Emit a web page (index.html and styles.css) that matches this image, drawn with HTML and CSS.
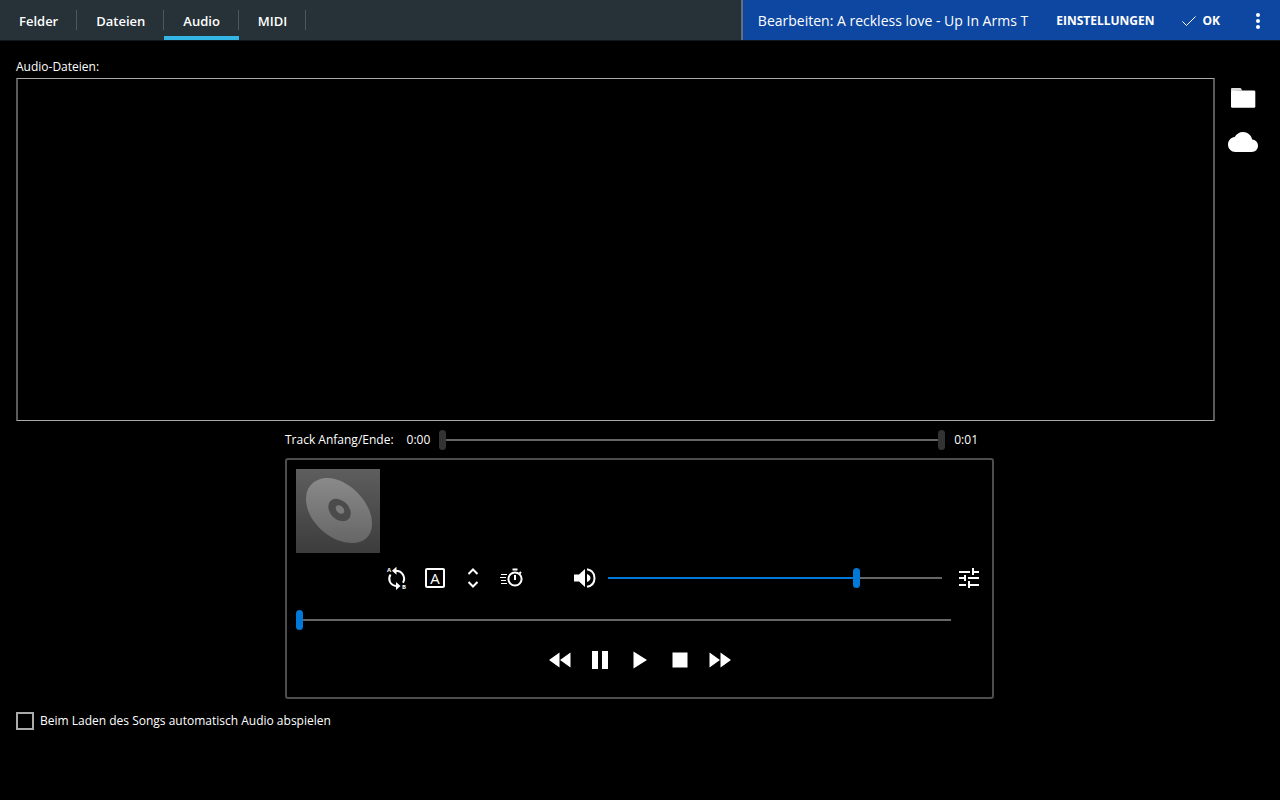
FILE: index.html
```
<!DOCTYPE html>
<html lang="de">

<head>
    <meta charset="UTF-8">
    <meta name="viewport" content="width=device-width, initial-scale=1.0">
    <title>Song bearbeiten</title>
    <link rel="stylesheet" href="styles.css">
</head>

<body>
    <header class="top-bar">
        <nav class="tabs">
            <a href="#felder" class="tab">Felder</a>
            <a href="#dateien" class="tab">Dateien</a>
            <a href="#audio" class="tab active" aria-current="page">Audio</a>
            <a href="#midi" class="tab">MIDI</a>
        </nav>
        <div class="action-bar">
            <h1 class="song-title">Bearbeiten: A reckless love - Up In Arms T</h1>
            <button type="button" class="action-btn">EINSTELLUNGEN</button>
            <button type="button" class="action-btn">
                <svg width="14" height="12" viewBox="0 0 14 12" fill="none" stroke="currentColor"><path d="M.5 6.500 4.500 10.500 13.500 1.500"/></svg>
                OK
            </button>
            <button type="button" class="more-btn" aria-label="Mehr">
                <svg width="4" height="16" viewBox="0 0 4 16" fill="currentColor"><circle cx="2" cy="2" r="2"/><circle cx="2" cy="8" r="2"/><circle cx="2" cy="14" r="2"/></svg>
            </button>
        </div>
    </header>

    <main class="content">
        <!-- Audio files -->
        <h2 class="list-label" id="filesLabel">Audio-Dateien:</h2>
        <section class="files">
            <ul class="file-list" aria-labelledby="filesLabel"></ul>
            <div class="file-buttons">
                <button type="button" class="file-btn" aria-label="Datei hinzufügen">
                    <svg width="26" height="20" viewBox="0 0 26 20"><path fill="#ddd" d="M1 3V1q0-1 1-1h8q1 0 1.500 1l.5 1.500z"/><path fill="#fff" d="M2 2.500h22q1.300 0 1.300 1.300v14.700q0 1.300-1.300 1.300H2.200Q1 19.800 1 18.500V3.500q0-1 1-1z"/></svg>
                </button>
                <button type="button" class="file-btn" aria-label="Aus der Cloud hinzufügen">
                    <svg width="30" height="20" viewBox="0 0 24 16" fill="#fff"><path d="M19.350 6.040C18.670 2.590 15.640 0 12 0 9.110 0 6.600 1.640 5.350 4.040 2.340 4.360 0 6.910 0 10c0 3.310 2.690 6 6 6h13c2.760 0 5-2.240 5-5 0-2.640-2.050-4.780-4.650-4.960z"/></svg>
                </button>
            </div>
        </section>

        <!-- Track start and end -->
        <section class="track-range">
            <span class="track-label">Track Anfang/Ende:</span>
            <output>0:00</output>
            <div class="dual-slider">
                <input type="range" class="slider grey" min="0" max="100" value="0" aria-label="Track Anfang">
                <input type="range" class="slider grey" min="0" max="100" value="100" aria-label="Track Ende">
            </div>
            <output>0:01</output>
        </section>

        <!-- Player -->
        <section class="player">
            <svg class="cover" width="84" height="84" viewBox="0 0 84 84">
                <defs>
                    <linearGradient id="back" x1="0" y1="0" x2="0" y2="1"><stop offset="0" stop-color="#5e5e5e"/><stop offset="1" stop-color="#3c3c3c"/></linearGradient>
                    <linearGradient id="disc" gradientUnits="userSpaceOnUse" x1="0" y1="9" x2="0" y2="74"><stop offset="0" stop-color="#8a8a8a"/><stop offset="1" stop-color="#666"/></linearGradient>
                </defs>
                <rect width="84" height="84" fill="url(#back)"/>
                <path fill="url(#disc)" d="M32 9c18 0 44 22 44 46 0 12-8 19-20 19C34 74 10 52 10 30 10 17 19 9 32 9z"/>
                <ellipse cx="43.500" cy="41" rx="12.800" ry="9.400" transform="rotate(45 43.500 41)" fill="#4b4b4b"/>
                <ellipse cx="44" cy="40.500" rx="5" ry="3.400" transform="rotate(45 44 40.500)" fill="#7a7a7a"/>
            </svg>

            <div class="controls">
                <button type="button" class="icon-btn" aria-label="A-B Schleife">
                    <svg width="22" height="24" viewBox="0 0 22 24" fill="none" stroke="#fff" stroke-width="2">
                        <path d="M4.500 8.500C1.500 13.500 4 19.500 10.500 20M9.500 4.800c7 0 10.500 6.500 7.500 12"/>
                        <path fill="#fff" stroke="none" d="M6 4.800 10.500.8v8zM14.500 20 10 16v8z"/>
                        <text class="loop-letter" x="1" y="6">A</text>
                        <text class="loop-letter" x="16" y="23">B</text>
                    </svg>
                </button>
                <button type="button" class="icon-btn" aria-label="Automatisch"><span class="boxed">A</span></button>
                <button type="button" class="icon-btn" aria-label="Tonhöhe">
                    <svg width="12" height="20" viewBox="0 0 12 20" fill="none" stroke="#fff" stroke-width="2"><path d="M1.500 6 6 1.500 10.500 6M1.500 14 6 18.500l4.500-4.500"/></svg>
                </button>
                <button type="button" class="icon-btn" aria-label="Tempo">
                    <svg width="24" height="20" viewBox="0 0 24 20" fill="none" stroke="#fff" stroke-width="2">
                        <circle cx="16" cy="11" r="6.600"/>
                        <path d="M13.500 1.500h5M16 7v5M20.500 5.500l1.500-1.500"/>
                        <path stroke-width="1" d="M2 6.500h6M1 9.500h6M2 12.500h5M2 15.500h6"/>
                    </svg>
                </button>
                <button type="button" class="icon-btn volume-btn" aria-label="Stumm">
                    <svg width="22" height="20" viewBox="0 0 22 20" fill="#fff"><path d="M0 6.500h5L11 1v18l-6-5.500H0zM13 6q3.500 1.500 3.500 4T13 14z"/><path fill="none" stroke="#fff" stroke-width="2" d="M13 1.200c4.500.8 7.500 4 7.500 8.800s-3 8-7.500 8.800"/></svg>
                </button>
                <input type="range" class="slider blue volume" min="0" max="100" value="75" aria-label="Lautstärke">
                <button type="button" class="icon-btn mixer-btn" aria-label="Equalizer">
                    <svg width="20" height="20" viewBox="0 0 20 20" fill="none" stroke="#fff" stroke-width="2"><path d="M0 4h11M14 4h6M14 0v7M0 10h5M6 7v6M9 10h11M0 17h7M10 13v7M10 17h10"/></svg>
                </button>
            </div>

            <input type="range" class="slider blue seek" min="0" max="100" value="0" aria-label="Position">

            <div class="transport">
                <button type="button" class="icon-btn" aria-label="Zurück">
                    <svg width="22" height="16" viewBox="0 0 22 16" fill="#fff"><path d="M10.500 .5v15L0 8zM21.500 .5v15L11 8z"/></svg>
                </button>
                <button type="button" class="icon-btn" aria-label="Pause">
                    <svg width="16" height="18" viewBox="0 0 16 18" fill="#fff"><path d="M0 0h6v18H0zM10 0h6v18h-6z"/></svg>
                </button>
                <button type="button" class="icon-btn" aria-label="Wiedergabe">
                    <svg width="14" height="18" viewBox="0 0 14 18" fill="#fff"><path d="M.5.500 14 9 .5 17.500z"/></svg>
                </button>
                <button type="button" class="icon-btn" aria-label="Stopp">
                    <svg width="16" height="16" viewBox="0 0 16 16" fill="#fff"><path d="M.5.500h15v15H.5z"/></svg>
                </button>
                <button type="button" class="icon-btn" aria-label="Vor">
                    <svg width="22" height="16" viewBox="0 0 22 16" fill="#fff"><path d="M.5 .5v15L11 8zM11.500 .5v15L22 8z"/></svg>
                </button>
            </div>
        </section>

        <div class="auto-play">
            <input type="checkbox" id="autoPlay">
            <label for="autoPlay">Beim Laden des Songs automatisch Audio abspielen</label>
        </div>
    </main>
</body>

</html>
```
FILE: styles.css
```
* {
    box-sizing: border-box;
}

body {
    margin: 0;
    min-height: 100vh;
    display: flex;
    flex-direction: column;
    background: #000;
    color: #fff;
    font-family: "Open Sans", "Noto Sans", sans-serif;
    font-size: 12px;
    line-height: 16px;
}

button {
    margin: 0;
    padding: 0;
    border: none;
    background: none;
    color: inherit;
    font: inherit;
    cursor: pointer;
}

svg {
    display: block;
}

/* Top bar */
.top-bar {
    display: flex;
    height: 41px;
    background: #263238;
    border-bottom: 1px solid #10191d;
}

.tabs {
    display: flex;
    flex: 1;
}

.tab {
    display: flex;
    align-items: center;
    padding: 6px 19px 0;
    border-bottom: 4px solid transparent;
    /* Short divider on the right edge */
    background: linear-gradient(#4d585d, #4d585d) no-repeat right 10px / 1px 20px;
    background-origin: border-box;
    color: #fff;
    font-size: 13px;
    font-weight: 600;
    text-decoration: none;
}

.tab.active {
    border-bottom-color: #33b5e5;
}

.action-bar {
    display: flex;
    flex: none;
    align-items: center;
    gap: 28px;
    padding: 2px 12px 0 15px;
    border-left: 2px solid #607080;
    background: #0d47a1;
}

.song-title {
    margin: 0;
    font-size: 14px;
    font-weight: 400;
    white-space: nowrap;
}

.action-btn {
    display: flex;
    align-items: center;
    gap: 6px;
    font-weight: 700;
}

.more-btn {
    display: flex;
    justify-content: center;
    width: 20px;
}

/* Content */
.content {
    display: flex;
    flex: 1;
    flex-direction: column;
    padding: 18px 17px 70px 16px;
}

.list-label {
    margin: 0 0 3px;
    font-size: 12px;
    font-weight: 400;
}

.files {
    display: flex;
    flex: 1;
    gap: 8px;
}

.file-list {
    flex: 1;
    margin: 0;
    padding: 0;
    border: solid;
    border-width: 1px 2px;
    border-color: #aaa #5a5a5a;
    list-style: none;
}

.file-buttons {
    display: flex;
    flex-direction: column;
    gap: 4px;
}

.file-btn {
    display: flex;
    align-items: center;
    justify-content: center;
    width: 40px;
    height: 40px;
}

/* Sliders */
.slider {
    appearance: none;
    width: 100%;
    height: 20px;
    margin: 0;
    background: none;
}

.slider::-webkit-slider-runnable-track {
    height: 20px;
    background: linear-gradient(#666, #666) no-repeat center / 100% 2px;
}

.slider::-webkit-slider-thumb {
    appearance: none;
    width: 7px;
    height: 20px;
    border-radius: 4px;
    background: #333;
}

.slider.blue::-webkit-slider-thumb {
    background: #0078d7;
}

.slider.volume::-webkit-slider-runnable-track {
    background: linear-gradient(to right, #0078d7 75%, #666 75%) no-repeat center / 100% 2px;
}

/* Both thumbs share one track */
.dual-slider {
    display: grid;
    flex: 1;
}

.dual-slider .slider {
    grid-area: 1 / 1;
    pointer-events: none;
}

.dual-slider .slider + .slider::-webkit-slider-runnable-track {
    background: none;
}

.dual-slider .slider::-webkit-slider-thumb {
    pointer-events: auto;
}

.track-range,
.player {
    width: 100%;
    max-width: 709px;
    align-self: center;
}

.track-range {
    display: flex;
    align-items: center;
    gap: 9px;
    margin: 9px 0 8px;
    padding-right: 16px;
}

.track-label {
    margin-right: 4px;
}

/* Player */
.player {
    padding: 9px 9px 18px;
    border: 2px solid #4d4d4d;
    border-radius: 3px;
}

.controls {
    display: flex;
    align-items: center;
    margin-top: 6px;
    padding-left: 82px;
}

.icon-btn {
    display: flex;
    flex: none;
    align-items: center;
    justify-content: center;
    width: 38px;
    height: 38px;
}

.loop-letter {
    fill: #fff;
    stroke: none;
    font-size: 6px;
    font-weight: 700;
}

.boxed {
    width: 20px;
    height: 20px;
    border: 2px solid #fff;
    border-radius: 2px;
    font-size: 15px;
}

.volume-btn {
    margin: 0 4px 0 36px;
}

.volume {
    flex: 1;
    min-width: 0;
}

.mixer-btn {
    width: 28px;
    margin-left: 13px;
}

.seek {
    display: block;
    width: calc(100% - 32px);
    margin: 13px 0 11px;
}

.transport {
    display: flex;
    justify-content: center;
    gap: 2px;
}

/* Autoplay option */
.auto-play {
    display: flex;
    align-items: center;
    gap: 6px;
    margin-top: 13px;
}

.auto-play input {
    appearance: none;
    width: 18px;
    height: 18px;
    margin: 0;
    border: 2px solid #aaa;
}

.auto-play input:checked {
    background: #0078d7;
}
```
